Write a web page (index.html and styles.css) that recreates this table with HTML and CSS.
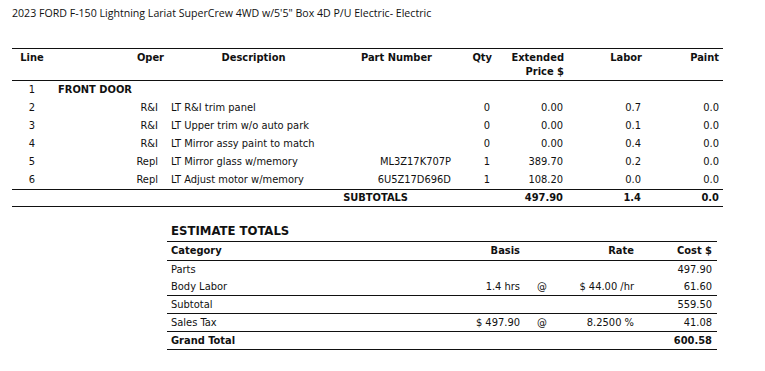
FILE: index.html
```html
<!DOCTYPE html>
<html>
<head>
<meta charset="utf-8">
<link rel="stylesheet" href="styles.css">
</head>
<body>
<div class="page">
  <div class="vehicle">2023 FORD F-150 Lightning Lariat SuperCrew 4WD w/5'5" Box 4D P/U Electric- Electric</div>

  <table class="lines">
    <colgroup>
      <col class="c-line"><col class="c-oper"><col class="c-desc"><col class="c-part"><col class="c-qty"><col class="c-price"><col class="c-labor"><col class="c-paint">
    </colgroup>
    <thead>
      <tr>
        <th class="h-line">Line</th>
        <th class="h-oper">Oper</th>
        <th class="h-desc">Description</th>
        <th class="h-part">Part Number</th>
        <th class="h-qty">Qty</th>
        <th class="h-price">Extended<br>Price $</th>
        <th class="h-labor">Labor</th>
        <th class="h-paint">Paint</th>
      </tr>
    </thead>
    <tbody>
      <tr class="group">
        <td class="line">1</td>
        <td class="grp" colspan="7">FRONT DOOR</td>
      </tr>
      <tr>
        <td class="line">2</td><td class="oper">R&amp;I</td><td class="desc">LT R&amp;I trim panel</td><td class="part"></td><td class="qty">0</td><td class="price">0.00</td><td class="labor">0.7</td><td class="paint">0.0</td>
      </tr>
      <tr>
        <td class="line">3</td><td class="oper">R&amp;I</td><td class="desc">LT Upper trim w/o auto park</td><td class="part"></td><td class="qty">0</td><td class="price">0.00</td><td class="labor">0.1</td><td class="paint">0.0</td>
      </tr>
      <tr>
        <td class="line">4</td><td class="oper">R&amp;I</td><td class="desc">LT Mirror assy paint to match</td><td class="part"></td><td class="qty">0</td><td class="price">0.00</td><td class="labor">0.4</td><td class="paint">0.0</td>
      </tr>
      <tr>
        <td class="line">5</td><td class="oper">Repl</td><td class="desc">LT Mirror glass w/memory</td><td class="part">ML3Z17K707P</td><td class="qty">1</td><td class="price">389.70</td><td class="labor">0.2</td><td class="paint">0.0</td>
      </tr>
      <tr>
        <td class="line">6</td><td class="oper">Repl</td><td class="desc">LT Adjust motor w/memory</td><td class="part">6U5Z17D696D</td><td class="qty">1</td><td class="price">108.20</td><td class="labor">0.0</td><td class="paint">0.0</td>
      </tr>
    </tbody>
    <tfoot>
      <tr>
        <td colspan="4" class="sub-label">SUBTOTALS</td>
        <td class="qty"></td>
        <td class="price">497.90</td>
        <td class="labor">1.4</td>
        <td class="paint">0.0</td>
      </tr>
    </tfoot>
  </table>

  <section class="totals">
    <h2 class="totals-title">ESTIMATE TOTALS</h2>
    <table class="tot">
      <colgroup>
        <col class="t-cat"><col class="t-basis"><col class="t-at"><col class="t-rate"><col class="t-cost">
      </colgroup>
      <thead>
        <tr><th class="cat">Category</th><th class="basis">Basis</th><th class="at"></th><th class="rate">Rate</th><th class="cost">Cost $</th></tr>
      </thead>
      <tbody>
        <tr><td class="cat">Parts</td><td class="basis"></td><td class="at"></td><td class="rate"></td><td class="cost">497.90</td></tr>
        <tr><td class="cat">Body Labor</td><td class="basis">1.4 hrs</td><td class="at">@</td><td class="rate">$ 44.00 /hr</td><td class="cost">61.60</td></tr>
      </tbody>
      <tbody>
        <tr class="ruled"><td class="cat">Subtotal</td><td class="basis"></td><td class="at"></td><td class="rate"></td><td class="cost">559.50</td></tr>
        <tr class="ruled"><td class="cat">Sales Tax</td><td class="basis">$ 497.90</td><td class="at">@</td><td class="rate">8.2500 %</td><td class="cost">41.08</td></tr>
        <tr class="ruled grand"><td class="cat">Grand Total</td><td class="basis"></td><td class="at"></td><td class="rate"></td><td class="cost">600.58</td></tr>
      </tbody>
    </table>
  </section>
</div>
</body>
</html>
```

FILE: styles.css
```css
html, body {
  margin: 0;
  padding: 0;
  background: #ffffff;
}

body {
  font-family: "DejaVu Sans Condensed", "DejaVu Sans", sans-serif;
  font-size: 11px;
  color: #111;
}

.page {
  padding: 6px 0 0 12px;
  width: 711px;
}

.vehicle {
  font-family: "Open Sans", "DejaVu Sans Condensed", sans-serif;
  font-size: 10.6px;
  line-height: 14px;
  height: 14px;
}

/* ---------- line items ---------- */
.lines {
  margin-top: 28px;
  width: 711px;
  border-collapse: collapse;
  table-layout: fixed;
}

.c-line { width: 40px; }
.c-oper { width: 112px; }
.c-desc { width: 183px; }
.c-part { width: 108px; }
.c-qty { width: 45px; }
.c-price { width: 70px; }
.c-labor { width: 78px; }
.c-paint { width: 75px; }

.lines th,
.lines td {
  padding: 0;
  white-space: nowrap;
}

.lines thead tr {
  border-top: 1px solid #111;
  border-bottom: 1px solid #111;
}

.lines th {
  font-weight: bold;
  vertical-align: top;
  line-height: 14px;
  padding-top: 2px;
  padding-bottom: 1px;
}

.h-line { text-align: center; }
.h-oper { text-align: right; padding-right: 0 !important; }
.h-desc { text-align: center; padding-right: 4px !important; }
.h-part { text-align: right; padding-right: 23px !important; }
.h-qty { text-align: right; padding-right: 8px !important; }
.h-price { text-align: right; padding-right: 6px !important; }
.h-labor { text-align: right; padding-right: 6px !important; }
.h-paint { text-align: right; padding-right: 4px !important; }

.lines tbody td {
  height: 18px;
  line-height: 18px;
}

.line { text-align: center; }
.oper { text-align: right; padding-right: 6px !important; }
.desc { text-align: left; padding-left: 7px !important; }
.part { text-align: right; padding-right: 4px !important; }
.qty { text-align: right; padding-right: 10px !important; }
.price { text-align: right; padding-right: 7px !important; }
.labor { text-align: right; padding-right: 7px !important; }
.paint { text-align: right; padding-right: 4px !important; }

.grp {
  font-weight: bold;
  padding-left: 6px !important;
}

.lines tfoot tr {
  border-top: 1px solid #111;
  border-bottom: 1px solid #111;
}

.lines tfoot td {
  font-weight: bold;
  height: 16px;
  line-height: 16px;
}

.sub-label {
  text-align: right;
  padding-right: 47px !important;
}

/* ---------- estimate totals ---------- */
.totals {
  margin-left: 155px;
  width: 550px;
}

.totals-title {
  margin: 0;
  font-size: 13px;
  font-weight: bold;
  line-height: 20px;
  padding: 14px 0 0 4px;
}

.tot {
  width: 550px;
  border-collapse: collapse;
  table-layout: fixed;
}

.t-cat { width: 263px; }
.t-basis { width: 94px; }
.t-at { width: 36px; }
.t-rate { width: 78px; }
.t-cost { width: 79px; }

.tot th,
.tot td {
  padding: 0;
  white-space: nowrap;
  height: 17px;
  line-height: 17px;
}

.tot thead tr {
  border-top: 1px solid #111;
  border-bottom: 1px solid #111;
}

.tot th { font-weight: bold; height: 18px; line-height: 18px; }

.tot .cat { text-align: left; padding-left: 4px; }
.tot .basis { text-align: right; padding-right: 4px; }
.tot .at { text-align: left; padding-left: 13px; }
.tot .rate { text-align: right; padding-right: 4px; }
.tot .cost { text-align: right; padding-right: 5px; }

.ruled {
  border-top: 1px solid #111;
}

.grand {
  border-bottom: 1px solid #111;
}

.grand td { font-weight: bold; }
```
